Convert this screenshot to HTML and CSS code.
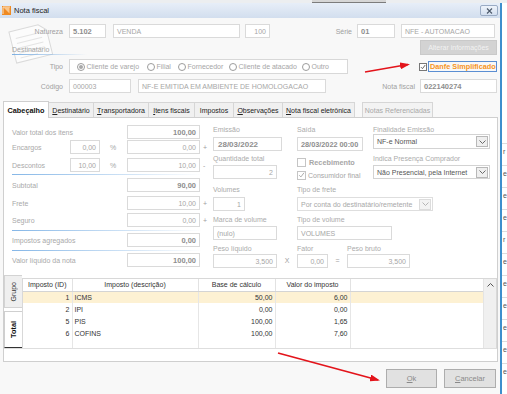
FILE: index.html
```html
<!DOCTYPE html>
<html lang="pt-BR">
<head>
    <meta charset="UTF-8">
    <meta name="viewport" content="width=device-width, initial-scale=1.0">
    <title>Nota fiscal</title>
    <link rel="stylesheet" href="styles.css">
</head>
<body>
    <div class="topstrip"><div class="bg-button"></div></div>
    <div class="screen">
        <div class="dialog">
            <div class="titlebar">
                <svg class="app-icon" width="9" height="9" viewBox="0 0 9 9">
                    <rect width="9" height="9" fill="#ef8a22"/>
                    <path d="M1.5 1.5L7.5 7.5V1.5z" fill="#f9c68c"/>
                    <path d="M1 8V1h7" fill="none" stroke="#fbe0c0" stroke-width="1"/>
                </svg>
                <span class="title">Nota fiscal</span>
                <div class="close-btn">
                    <svg width="7" height="6" viewBox="0 0 7 6"><path d="M1 .5l5 5M6 .5l-5 5" stroke="#4d5a6b" stroke-width="1.1"/></svg>
                </div>
            </div>

            <div class="dlg-body">
                <!-- marca d'agua do documento -->
                <svg class="watermark" width="56" height="44" viewBox="0 0 56 44">
                    <g transform="rotate(-14 28 22)" stroke="#dadada" stroke-width="1">
                        <path d="M9 7h30l7 7v25H9z" fill="#fcfcfc"/>
                        <path d="M14 15h22M14 20h26M14 25h26M14 30h26M14 35h18" stroke="#e4e4e4"/>
                    </g>
                </svg>

                <div class="hrow row-natureza">
                    <span class="lbl-r">Natureza</span>
                    <div class="fld strong f-cfop">5.102</div>
                    <div class="fld f-venda">VENDA</div>
                    <div class="fld num f-cem">100</div>
                    <span class="lbl-r lbl-serie">Série</span>
                    <div class="fld strong f-serie">01</div>
                    <div class="fld f-serie-desc">NFE - AUTOMACAO</div>
                </div>

                <div class="hrow row-dest">
                    <span class="dest-title">Destinatário</span>
                    <div class="btn-alterar">Alterar informações</div>
                </div>

                <div class="hrow row-tipo">
                    <span class="lbl-r">Tipo</span>
                    <div class="radio-box">
                        <span class="radio-item ri-varejo"><span class="radio on"></span>Cliente de varejo</span>
                        <span class="radio-item ri-filial"><span class="radio"></span>Filial</span>
                        <span class="radio-item ri-forn"><span class="radio"></span>Fornecedor</span>
                        <span class="radio-item ri-atacado"><span class="radio"></span>Cliente de atacado</span>
                        <span class="radio-item"><span class="radio"></span>Outro</span>
                    </div>
                    <div class="danfe">
                        <span class="check-box dark">
                            <svg width="8" height="8" viewBox="0 0 8 8"><path d="M1.3 4.2l2 2 3.6-4.8" fill="none" stroke="#555" stroke-width="1.2"/></svg>
                        </span>
                        <span class="danfe-label">Danfe Simplificado</span>
                    </div>
                </div>

                <div class="hrow row-codigo">
                    <span class="lbl-r">Código</span>
                    <div class="fld f-codigo">000003</div>
                    <div class="fld f-nome">NF-E EMITIDA EM AMBIENTE DE HOMOLOGACAO</div>
                    <span class="lbl-r lbl-nf">Nota fiscal</span>
                    <div class="fld strong f-nf">022140274</div>
                </div>

                <div class="tabs">
                    <div class="tab active t-cab">Cabeçalho</div>
                    <div class="tab t-dest"><u>D</u>estinatário</div>
                    <div class="tab t-transp"><u>T</u>ransportadora</div>
                    <div class="tab t-itens"><u>I</u>tens fiscais</div>
                    <div class="tab t-imp">Impostos</div>
                    <div class="tab t-obs"><u>O</u>bservações</div>
                    <div class="tab t-nfe"><u>N</u>ota fiscal eletrônica</div>
                    <div class="tab disabled t-ref">Notas Referenciadas</div>
                </div>

                <div class="panel">
                    <div class="form">
                        <div class="col-left">
                            <div class="lrow">
                                <span class="cap-l">Valor total dos itens</span>
                                <div class="fld num strong val">100,00</div>
                            </div>
                            <div class="lrow sm r-enc">
                                <span class="cap-l">Encargos</span>
                                <div class="fld num sm-fld">0,00</div>
                                <span class="pct">%</span>
                                <div class="fld num val">0,00</div>
                                <span class="sign">+</span>
                            </div>
                            <div class="lrow sm r-desc">
                                <span class="cap-l">Descontos</span>
                                <div class="fld num sm-fld">10,00</div>
                                <span class="pct">%</span>
                                <div class="fld num val">10,00</div>
                                <span class="sign">-</span>
                            </div>
                            <div class="sep s1"></div>
                            <div class="lrow r-sub">
                                <span class="cap-l">Subtotal</span>
                                <div class="fld num strong val">90,00</div>
                            </div>
                            <div class="lrow r-frete">
                                <span class="cap-l">Frete</span>
                                <div class="fld num val">10,00</div>
                                <span class="sign">+</span>
                            </div>
                            <div class="lrow r-seg">
                                <span class="cap-l">Seguro</span>
                                <div class="fld num val">0,00</div>
                                <span class="sign">+</span>
                            </div>
                            <div class="sep s2"></div>
                            <div class="lrow r-imp">
                                <span class="cap-l">Impostos agregados</span>
                                <div class="fld num strong val">0,00</div>
                            </div>
                            <div class="sep s3"></div>
                            <div class="lrow r-liq">
                                <span class="cap-l">Valor líquido da nota</span>
                                <div class="fld num strong val">100,00</div>
                            </div>
                        </div>

                        <div class="col-mid">
                            <div class="mrow">
                                <div class="cell c1">
                                    <span class="cap">Emissão</span>
                                    <div class="fld date f-emissao">28/03/2022</div>
                                </div>
                                <div class="cell c2">
                                    <span class="cap">Saída</span>
                                    <div class="fld date f-saida">28/03/2022 00:00</div>
                                </div>
                                <div class="cell c3">
                                    <span class="cap">Finalidade Emissão</span>
                                    <div class="select sel-fin">NF-e Normal
                                        <span class="drop"><svg width="7" height="4" viewBox="0 0 7 4"><path d="M.5.5l3 3 3-3" fill="none" stroke="#6a6a6a"/></svg></span>
                                    </div>
                                </div>
                            </div>

                            <div class="mrow m-b">
                                <div class="cell c1">
                                    <span class="cap">Quantidade total</span>
                                    <div class="fld num f-qtd">2</div>
                                </div>
                                <div class="cell c2 checks">
                                    <span class="check-line"><span class="check-box"></span><b class="receb">Recebimento</b></span>
                                    <span class="check-line cons">
                                        <span class="check-box">
                                            <svg width="8" height="8" viewBox="0 0 8 8"><path d="M1.3 4.2l2 2 3.6-4.8" fill="none" stroke="#aaa" stroke-width="1.1"/></svg>
                                        </span>Consumidor final
                                    </span>
                                </div>
                                <div class="cell c3">
                                    <span class="cap">Indica Presença Comprador</span>
                                    <div class="select sel-pres">Não Presencial, pela Internet
                                        <span class="drop"><svg width="7" height="4" viewBox="0 0 7 4"><path d="M.5.5l3 3 3-3" fill="none" stroke="#6a6a6a"/></svg></span>
                                    </div>
                                </div>
                            </div>

                            <div class="mrow m-c">
                                <div class="cell c1">
                                    <span class="cap">Volumes</span>
                                    <div class="fld num f-vol">1</div>
                                </div>
                                <div class="cell">
                                    <span class="cap">Tipo de frete</span>
                                    <div class="select off sel-frete">Por conta do destinatário/remetente
                                        <span class="drop"><svg width="7" height="4" viewBox="0 0 7 4"><path d="M.5.5l3 3 3-3" fill="none" stroke="#b5b5b5"/></svg></span>
                                    </div>
                                </div>
                            </div>

                            <div class="mrow m-d">
                                <div class="cell c1">
                                    <span class="cap">Marca de volume</span>
                                    <div class="fld f-marca">(nulo)</div>
                                </div>
                                <div class="cell">
                                    <span class="cap">Tipo de volume</span>
                                    <div class="fld f-tipovol">VOLUMES</div>
                                </div>
                            </div>

                            <div class="mrow m-e">
                                <div class="cell p-liq">
                                    <span class="cap">Peso líquido</span>
                                    <div class="fld num">3,500</div>
                                </div>
                                <span class="op op-x">X</span>
                                <div class="cell p-fator">
                                    <span class="cap">Fator</span>
                                    <div class="fld num">0,00</div>
                                </div>
                                <span class="op op-eq">=</span>
                                <div class="cell p-bruto">
                                    <span class="cap">Peso bruto</span>
                                    <div class="fld num">3,500</div>
                                </div>
                            </div>
                        </div>
                    </div>

                    <div class="bottom">
                        <div class="vtabs">
                            <div class="vtab"><span>Grupo</span></div>
                            <div class="vtab active"><span>Total</span></div>
                        </div>
                        <div class="grid">
                            <table class="taxes">
                                <colgroup>
                                    <col class="k-id"><col class="k-desc"><col class="k-base"><col class="k-valor"><col>
                                </colgroup>
                                <thead>
                                    <tr><th>Imposto (ID)</th><th>Imposto (descrição)</th><th>Base de cálculo</th><th>Valor do imposto</th><th></th></tr>
                                </thead>
                                <tbody>
                                    <tr class="sel"><td class="n">1</td><td>ICMS</td><td class="n">50,00</td><td class="n">6,00</td><td></td></tr>
                                    <tr><td class="n">2</td><td>IPI</td><td class="n">0,00</td><td class="n">0,00</td><td></td></tr>
                                    <tr><td class="n">5</td><td>PIS</td><td class="n">100,00</td><td class="n">1,65</td><td></td></tr>
                                    <tr><td class="n">6</td><td>COFINS</td><td class="n">100,00</td><td class="n">7,60</td><td></td></tr>
                                    <tr class="fill"><td></td><td></td><td></td><td></td><td></td></tr>
                                </tbody>
                            </table>
                            <div class="scroll">
                                <svg width="7" height="4" viewBox="0 0 7 4"><path d="M.5 3.5l3-3 3 3" fill="none" stroke="#555"/></svg>
                            </div>
                        </div>
                    </div>
                    <div class="panel-foot"></div>
                </div>

                <div class="buttons">
                    <div class="btn"><u>O</u>k</div>
                    <div class="btn"><u>C</u>ancelar</div>
                </div>
            </div>
        </div>

        <div class="side">
            <div class="side-row">r</div>
            <div class="side-row">e</div>
            <div class="side-row">e</div>
            <div class="side-row">e</div>
            <div class="side-row">r</div>
            <div class="side-row">e</div>
            <div class="side-row">e</div>
            <div class="side-row">e</div>
            <div class="side-row">e</div>
            <div class="side-row">e</div>
            <div class="side-row">e</div>
        </div>
    </div>

    <!-- setas vermelhas da anotacao -->
    <svg class="arrows" width="507" height="394" viewBox="0 0 507 394">
        <defs>
            <marker id="head" markerWidth="10" markerHeight="7" refX="8" refY="3.5" orient="auto" markerUnits="userSpaceOnUse">
                <path d="M0 0L10 3.5L0 7z" fill="#e3141b"/>
            </marker>
        </defs>
        <line x1="365" y1="72" x2="408" y2="64.5" stroke="#e3141b" stroke-width="1.6" marker-end="url(#head)"/>
        <line x1="278" y1="353" x2="378" y2="380" stroke="#e3141b" stroke-width="1.8" marker-end="url(#head)"/>
    </svg>
</body>
</html>
```

FILE: styles.css
```css
* {
    box-sizing: border-box;
}
body {
    margin: 0;
    width: 507px;
    height: 394px;
    overflow: hidden;
    position: relative;
    background: #fff;
    font-family: "Liberation Sans", Arial, sans-serif;
    font-size: 7px;
    color: #a6a6a6;
}
u {
    text-decoration: underline;
}
.topstrip {
    height: 3px;
    background: #eceef0;
}
.bg-button {
    margin-left: 312px;
    width: 74px;
    height: 3px;
    background: #d6d6d6;
    border-bottom: 1px solid #7c7c7c;
}
.screen {
    display: flex;
    height: 391px;
}
.dialog {
    width: 502px;
    flex: none;
    border-right: 2px solid #3d8fcd;
    background: #f8f8f8;
    display: flex;
    flex-direction: column;
}
.titlebar {
    height: 15px;
    flex: none;
    display: flex;
    align-items: center;
    padding-left: 2px;
    background: linear-gradient(#e7eef8, #d2deee);
}
.app-icon {
    display: block;
}
.title {
    margin-left: 3px;
    font-size: 7.5px;
    color: #1b1b1b;
}
.close-btn {
    margin-left: auto;
    margin-right: 2px;
    width: 18px;
    height: 11px;
    border: 1px solid #9aabc4;
    border-radius: 2px;
    background: linear-gradient(#eef3fa, #d3dff0);
    display: flex;
    align-items: center;
    justify-content: center;
}
.dlg-body {
    flex: 1;
    position: relative;
    padding-top: 6px;
}
.watermark {
    position: absolute;
    left: 3px;
    top: 2px;
}

/* cabecalho do formulario */
.hrow {
    display: flex;
    align-items: center;
    position: relative;
}
.lbl-r {
    width: 63px;
    margin-right: 6px;
    text-align: right;
    color: #a0a0a0;
}
.fld {
    height: 14px;
    border: 1px solid #dadada;
    background: #fff;
    display: flex;
    align-items: center;
    padding: 0 3px;
    white-space: nowrap;
    overflow: hidden;
    color: #a6a6a6;
}
.fld.num {
    justify-content: flex-end;
}
.fld.strong {
    font-weight: bold;
    font-size: 7.5px;
    color: #8e8e8e;
}
.fld.date {
    font-weight: bold;
    font-size: 8px;
    color: #8e8e8e;
    padding-left: 4px;
}
.row-natureza {
    height: 14px;
}
.f-cfop { width: 37px; }
.f-venda { width: 127px; margin-left: 7px; }
.f-cem { width: 25px; margin-left: 5px; }
.lbl-serie { width: 82px; margin-right: 5px; }
.f-serie { width: 38px; }
.f-serie-desc { width: 94px; margin-left: 6px; }

.row-dest {
    height: 15px;
    margin-top: 2px;
    padding-right: 3px;
}
.dest-title {
    align-self: flex-end;
    margin-left: 12px;
    width: 75px;
    height: 9px;
    line-height: 7px;
    background: linear-gradient(to right, #7eb0e2, rgba(126, 176, 226, 0)) no-repeat left bottom / 75px 1px;
}
.btn-alterar {
    margin-left: auto;
    width: 77px;
    height: 15px;
    background: #d3d3d3;
    border: 1px solid #c9c9c9;
    color: #f2f2f2;
    display: flex;
    align-items: center;
    justify-content: center;
}

.row-tipo {
    height: 15px;
    margin-top: 4px;
    padding-right: 3px;
}
.radio-box {
    width: 279px;
    height: 15px;
    border: 1px solid #d8d8d8;
    background: #fff;
    display: flex;
    align-items: center;
    padding-left: 7px;
}
.radio-item {
    display: flex;
    align-items: center;
    white-space: nowrap;
}
.ri-varejo { width: 70px; }
.ri-filial { width: 31px; }
.ri-forn { width: 51px; }
.ri-atacado { width: 73px; }
.radio {
    width: 8px;
    height: 8px;
    border: 1px solid #9c9c9c;
    border-radius: 50%;
    margin-right: 1.5px;
    display: flex;
    align-items: center;
    justify-content: center;
}
.radio.on::after {
    content: "";
    width: 4px;
    height: 4px;
    border-radius: 50%;
    background: #a8a8a8;
}
.danfe {
    margin-left: auto;
    display: flex;
    align-items: center;
}
.check-box {
    width: 8px;
    height: 8px;
    border: 1px solid #c5c5c5;
    background: #fff;
    display: inline-flex;
    align-items: center;
    justify-content: center;
    flex: none;
}
.check-box svg {
    display: block;
}
.check-box.dark {
    border-color: #777;
}
.danfe-label {
    margin-left: 1px;
    width: 69px;
    height: 11px;
    border: 1px solid #5b8ed2;
    display: flex;
    align-items: center;
    padding-left: 1px;
    font-weight: bold;
    font-size: 7.3px;
    color: #f7941d;
    white-space: nowrap;
}

.row-codigo {
    height: 14px;
    margin-top: 5px;
}
.f-codigo { width: 62px; }
.f-nome { width: 188px; margin-left: 7px; }
.lbl-nf { width: 89px; margin-right: 5px; }
.f-nf { width: 77px; }

/* abas */
.tabs {
    display: flex;
    align-items: flex-end;
    height: 15px;
    margin-top: 9px;
    padding-left: 3px;
}
.tab {
    height: 15px;
    border: 1px solid #d6d6d6;
    border-bottom: none;
    margin-left: -1px;
    background: #f0f0f0;
    color: #222;
    display: flex;
    align-items: center;
    justify-content: center;
    white-space: nowrap;
}
.tab.active {
    height: 17px;
    margin-left: 0;
    margin-bottom: -1px;
    background: #fff;
    border-color: #cfcfcf;
    font-weight: bold;
    font-size: 7.3px;
    color: #111;
    position: relative;
    z-index: 1;
}
.tab.disabled {
    color: #a8a8a8;
    background: #f3f3f3;
}
.t-cab { width: 46px; }
.t-dest { width: 46px; }
.t-transp { width: 56px; }
.t-itens { width: 47px; }
.t-imp { width: 40px; }
.t-obs { width: 50px; }
.t-nfe { width: 73px; }
.t-ref { width: 71px; margin-left: 7px; }

.panel {
    margin: 0 2px 0 3px;
    height: 245px;
    border: 1px solid #cfcfcf;
    background: #fff;
    display: flex;
    flex-direction: column;
}
.form {
    height: 157px;
    flex: none;
    display: flex;
    padding: 7px 0 0 8px;
}

/* coluna de valores */
.col-left {
    width: 201px;
    flex: none;
}
.lrow {
    display: flex;
    align-items: center;
    height: 14px;
}
.cap-l {
    width: 115px;
    color: #a9a9a9;
}
.lrow.sm .cap-l {
    width: 58px;
}
.sm-fld {
    width: 30px;
}
.pct {
    width: 27px;
    padding-left: 10px;
}
.val {
    width: 73px;
}
.sign {
    margin-left: 3px;
    color: #a0a0a0;
}
.r-enc { margin-top: 1px; }
.r-desc { margin-top: 4px; }
.r-sub { margin-top: 3px; }
.r-frete { margin-top: 4px; }
.r-seg { margin-top: 3px; }
.r-imp { margin-top: 2px; }
.r-liq { margin-top: 2px; }
.sep {
    height: 1px;
    width: 190px;
    background: linear-gradient(to right, #86b7e7, rgba(134, 183, 231, 0));
}
.s1 { margin-top: 2px; }
.s2 { margin-top: 3px; }
.s3 { margin-top: 3px; }

/* coluna do meio */
.col-mid {
    flex: 1;
}
.mrow {
    display: flex;
}
.cell {
    display: flex;
    flex-direction: column;
}
.cap {
    display: block;
    height: 9px;
    line-height: 9px;
    color: #ababab;
    white-space: nowrap;
}
.c1 { width: 84px; }
.c2 { width: 76px; }
.c3 { width: 117px; }
.f-emissao { width: 69px; margin-top: 3px; }
.f-saida {
    width: 66px;
    margin-top: 3px;
    font-size: 7.3px !important;
    padding-left: 3px !important;
    padding-right: 1px;
}
.select {
    height: 15px;
    border: 1px solid #d3d3d3;
    background: #fff;
    display: flex;
    align-items: center;
    padding-left: 3px;
    color: #555;
    white-space: nowrap;
    position: relative;
}
.select.off {
    color: #a8a8a8;
    border-color: #dedede;
}
.drop {
    margin-left: auto;
    margin-right: 1px;
    width: 12px;
    height: 11px;
    border: 1px solid #b8b8b8;
    background: #efefef;
    display: flex;
    align-items: center;
    justify-content: center;
}
.select.off .drop {
    border-color: #dcdcdc;
    background: #f3f3f3;
}
.sel-fin { width: 117px; }
.sel-pres { width: 117px; height: 14px; margin-top: 2px; }
.m-b { margin-top: 3px; }
.f-qtd { width: 64px; margin-top: 2px; }
.checks {
    padding-top: 3px;
}
.check-line {
    display: flex;
    align-items: center;
    height: 10px;
    white-space: nowrap;
}
.check-line .check-box {
    width: 9px;
    height: 9px;
    margin-right: 3px;
}
.check-line.cons {
    margin-top: 3px;
}
.check-line.cons .check-box {
    margin-right: 2px;
}
.receb {
    font-size: 7.3px;
    color: #a6a6a6;
}
.m-c { margin-top: 5px; }
.f-vol { width: 32px; margin-top: 3px; }
.sel-frete { width: 136px; height: 14px; margin-top: 3px; }
.m-d { margin-top: 4px; }
.f-marca { width: 64px; margin-top: 2px; }
.f-tipovol { width: 95px; margin-top: 2px; }
.m-e { margin-top: 4px; }
.m-e .fld { margin-top: 1px; }
.p-liq { width: 64px; }
.p-fator { width: 31px; }
.p-bruto { width: 63px; }
.op {
    padding-top: 10px;
    line-height: 14px;
    text-align: center;
    color: #a0a0a0;
}
.op-x { width: 20px; }
.op-eq { width: 19px; }

/* grade de impostos */
.bottom {
    height: 73px;
    flex: none;
    display: flex;
}
.vtabs {
    width: 18px;
    flex: none;
}
.vtab {
    height: 33px;
    border: 1px solid #d3d3d3;
    border-right: none;
    background: #efefef;
    color: #333;
    display: flex;
    align-items: center;
    justify-content: center;
}
.vtab span {
    writing-mode: vertical-rl;
    transform: rotate(180deg);
}
.vtab.active {
    margin-top: 3px;
    height: 37px;
    background: #fff;
    border-color: #cfcfcf;
    border-bottom: 1px solid #333;
    font-weight: bold;
    font-size: 7.3px;
    color: #111;
}
.grid {
    flex: 1;
    margin-top: 3px;
    height: 70px;
    border: 1px solid #d8d8d8;
    border-bottom: none;
    display: flex;
}
.taxes {
    flex: 1;
    table-layout: fixed;
    border-collapse: collapse;
    color: #333;
}
.k-id { width: 49px; }
.k-desc { width: 126px; }
.k-base { width: 77px; }
.k-valor { width: 75px; }
.taxes th {
    height: 12px;
    padding: 0;
    font-weight: normal;
    text-align: center;
    border-right: 1px solid #e2e2e2;
    border-bottom: 1px solid #d4d4d4;
    background: #fff;
}
.taxes td {
    height: 12px;
    padding: 0 2px;
    border-right: 1px solid #e6e6e6;
    white-space: nowrap;
}
.taxes td.n {
    text-align: right;
}
.taxes tr.sel td {
    background: #fdf1d3;
}
.taxes tr.fill td {
    height: 9px;
}
.taxes th:last-child,
.taxes td:last-child {
    border-right: none;
}
.scroll {
    width: 13px;
    flex: none;
    background: #f0f0f0;
    border-left: 1px solid #e4e4e4;
    display: flex;
    justify-content: center;
    padding-top: 4px;
}
.scroll svg {
    display: block;
}
.panel-foot {
    flex: 1;
    border-top: 1px solid #dedede;
}

/* botoes */
.buttons {
    display: flex;
    justify-content: flex-end;
    gap: 7px;
    padding: 7px 4px 0 0;
}
.btn {
    height: 19px;
    width: 51px;
    background: #e1e1e1;
    border: 1px solid #adadad;
    color: #8a8a8a;
    font-size: 7.5px;
    display: flex;
    align-items: center;
    justify-content: center;
}
.btn + .btn {
    width: 52px;
}

/* janela de fundo */
.side {
    flex: 1;
    background: #fff;
    padding-top: 140px;
    overflow: hidden;
}
.side-row {
    height: 22px;
    border-top: 1px solid #dcdcdc;
    padding: 4px 0 0 1px;
    color: #555;
    font-size: 7px;
}
.arrows {
    position: absolute;
    left: 0;
    top: 0;
    pointer-events: none;
}
```
